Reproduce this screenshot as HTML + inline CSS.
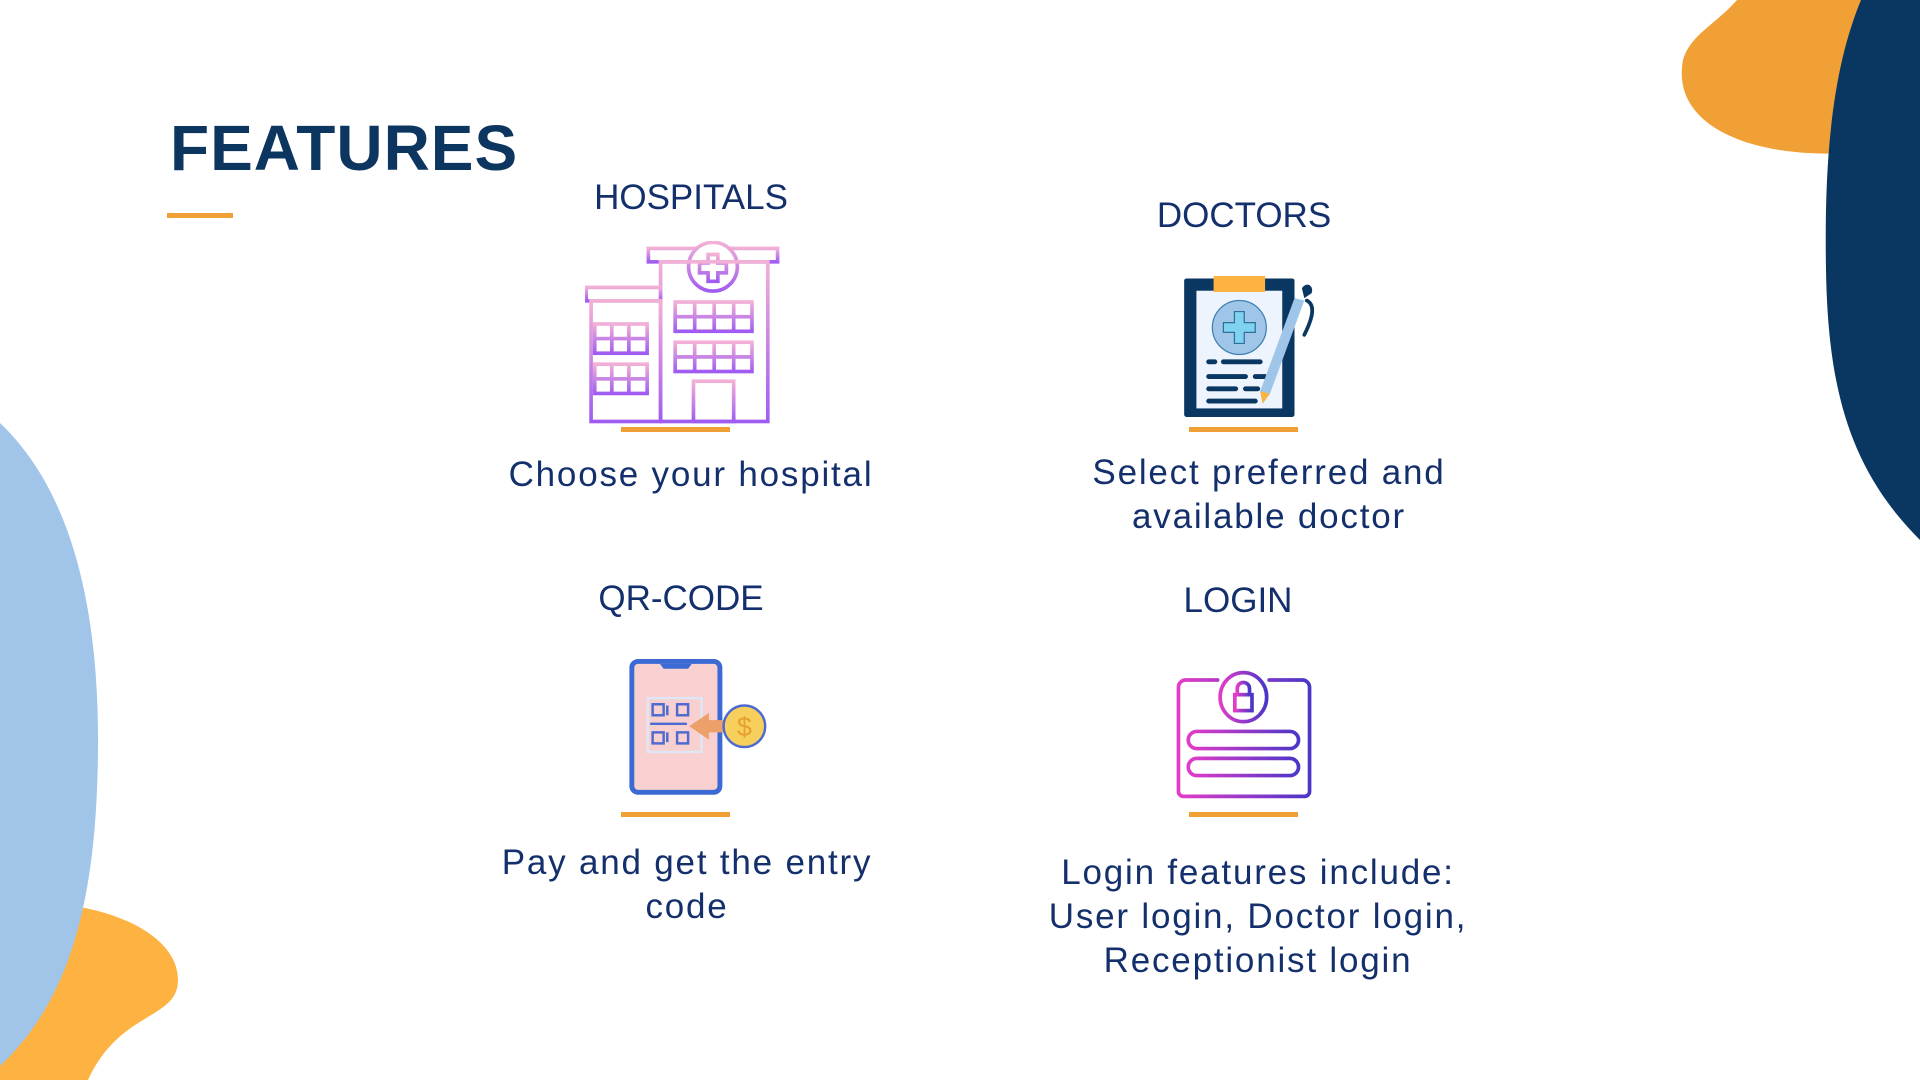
<!DOCTYPE html>
<html><head><meta charset="utf-8"><style>
html,body{margin:0;padding:0}
body{width:1920px;height:1080px;position:relative;overflow:hidden;background:#fff;font-family:"Liberation Sans",sans-serif;color:#14306c}
.t{position:absolute;white-space:nowrap;transform:translateX(-50%);text-align:center;font-size:35px;line-height:44px}
.d{font-size:35px;letter-spacing:1.8px}
.bar{position:absolute;background:#f0a035;height:5px;width:109px}
svg{position:absolute}
</style></head><body>
<svg style="left:0;top:0" width="1920" height="1080" viewBox="0 0 1920 1080">
<path d="M1737 0 C1715 25 1690 35 1683 60 C1670 130 1760 158 1845 153 L1920 150 L1920 0Z" fill="#f0a035"/>
<path d="M1861 0 C1832 70 1824 160 1826 270 C1828 390 1850 470 1920 540 L1920 0Z" fill="#0a3762"/>
<path d="M0 910 C60 890 178 920 178 980 C178 1020 120 1010 88 1080 L0 1080Z" fill="#fdb241"/>
<path d="M0 423 C60 480 98 580 98 740 C98 900 70 1000 0 1066Z" fill="#a0c5e8"/>
</svg>
<div style="position:absolute;left:170px;top:108px;font-size:64px;font-weight:bold;color:#0c3660;line-height:80px;letter-spacing:1px">FEATURES</div>
<div style="position:absolute;left:167px;top:213px;width:66px;height:5px;background:#f0a035"></div>

<div class="t" style="left:691px;top:176px">HOSPITALS</div>
<div class="t" style="left:1244px;top:194px">DOCTORS</div>
<div class="t" style="left:681px;top:577px">QR-CODE</div>
<div class="t" style="left:1238px;top:579px">LOGIN</div>

<div class="bar" style="left:621px;top:427px"></div>
<div class="bar" style="left:1189px;top:427px"></div>
<div class="bar" style="left:621px;top:812px"></div>
<div class="bar" style="left:1189px;top:812px"></div>

<div class="t d" style="left:691px;top:453px">Choose your hospital</div>
<div class="t d" style="left:1269px;top:451px">Select preferred and<br>available doctor</div>
<div class="t d" style="left:687px;top:841px">Pay and get the entry<br>code</div>
<div class="t d" style="left:1258px;top:851px">Login features include:<br>User login, Doctor login,<br>Receptionist login</div>

<!-- hospital -->
<svg style="left:585px;top:241px" width="195" height="183" viewBox="0 0 160 150">
<defs><linearGradient id="hg" x1="0" y1="0" x2="0" y2="1"><stop offset="0" stop-color="#f3b0d6"/><stop offset="1" stop-color="#a05cf2"/></linearGradient></defs>
<g fill="none" stroke="url(#hg)" stroke-width="3">
<rect x="52" y="6" width="106" height="11"/>
<circle cx="105" cy="21" r="20" fill="#fff"/>
<path d="M101 11h8v7h7v8h-7v7h-8v-7h-7v-8h7z"/>
<rect x="62" y="17" width="88" height="131"/>
<rect x="1" y="38" width="61" height="11"/>
<rect x="5" y="49" width="57" height="99"/>
<rect x="8" y="68" width="43" height="24"/><path d="M8 80h43M22 68v24M36 68v24"/>
<rect x="8" y="101" width="43" height="24"/><path d="M8 113h43M22 101v24M36 101v24"/>
<rect x="74" y="50" width="63" height="24"/><path d="M74 62h63M90 50v24M106 50v24M122 50v24"/>
<rect x="74" y="83" width="63" height="24"/><path d="M74 95h63M90 83v24M106 83v24M122 83v24"/>
<rect x="89" y="115" width="33" height="33"/><path d="M105 115v33"/>
</g></svg>

<!-- doctor -->
<svg style="left:1184px;top:276px" width="145" height="141" viewBox="0 0 118 115">
<rect x="0" y="2" width="90" height="113" rx="2" fill="#0a3762"/>
<rect x="10" y="12" width="70" height="96" fill="#eef4fd"/>
<rect x="24" y="0" width="42" height="13" fill="#fdb241"/>
<circle cx="45" cy="42" r="22" fill="#9fc5e8" stroke="#3d7fb0" stroke-width="1"/>
<path d="M41 29h8v9h9v8h-9v9h-8v-9h-9v-8h9z" fill="#7fd3f0" stroke="#2f6f9c" stroke-width="1"/>
<g stroke="#0a3762" stroke-width="4" stroke-linecap="round">
<path d="M20 70h5M32 70h30M20 82h30M58 82h8M20 92h22M50 92h10M20 102h38"/></g>
<path d="M90 18 L98 20 L70 96 L64 104 L62 94Z" fill="#9fc5e8"/>
<path d="M62 94 L70 96 L64 104Z" fill="#fdb241"/>
<path d="M96 10 C100 4 106 8 104 14 L98 18Z" fill="#0a3762"/>
<path d="M100 20 C108 24 104 36 98 48" stroke="#0a3762" stroke-width="3" fill="none" stroke-linecap="round"/>
</svg>

<!-- qr -->
<svg style="left:628px;top:659px" width="141" height="137" viewBox="0 0 115 112">
<rect x="3" y="2" width="72" height="107" rx="5" fill="#f8d0d0" stroke="#3b6ad4" stroke-width="4"/>
<path d="M26 4h26l-3 4h-20z" fill="#3b6ad4"/>
<rect x="16" y="32" width="44" height="44" fill="none" stroke="#dfe6f6" stroke-width="2"/>
<g fill="none" stroke="#4c6ad0" stroke-width="2">
<rect x="20" y="37" width="9" height="9"/><rect x="40" y="37" width="9" height="9"/><rect x="20" y="60" width="9" height="9"/><rect x="40" y="60" width="9" height="9"/>
<path d="M32 38v8M18 53h30M32 60v8"/></g>
<path d="M50 55 L66 44 L66 50 L84 50 L84 60 L66 60 L66 66Z" fill="#eea06a"/>
<circle cx="95" cy="55" r="17" fill="#f7cf5c" stroke="#4c6ad0" stroke-width="2"/>
<text x="95" y="63" font-size="22" text-anchor="middle" fill="#e8a030" font-family="Liberation Sans">$</text>
</svg>

<!-- login -->
<svg style="left:1176px;top:670px" width="136" height="129" viewBox="0 0 111 105">
<defs><linearGradient id="lg" x1="0" y1="0" x2="1" y2="0"><stop offset="0" stop-color="#e23cc8"/><stop offset="1" stop-color="#4a36c8"/></linearGradient></defs>
<g fill="none" stroke="url(#lg)" stroke-width="3" stroke-linecap="round">
<path d="M34 8H8a6 6 0 0 0-6 6v85a4 4 0 0 0 4 4h99a4 4 0 0 0 4-4V14a6 6 0 0 0-6-6H76"/>
<path d="M2 35h33M76 35h33"/>
<ellipse cx="55" cy="22" rx="19" ry="20"/>
<rect x="48" y="20" width="14" height="13"/><path d="M50 20v-5a5 5 0 0 1 10 0v5"/>
<rect x="10" y="50" width="90" height="14" rx="7"/><path d="M17 57h76"/>
<rect x="10" y="72" width="90" height="14" rx="7"/>
<path d="M18 79h1M25 79h1M32 79h1M39 79h1M46 79h1M53 79h1M60 79h1M67 79h1M74 79h1M81 79h1M88 79h1" stroke-width="2.5"/>
</g></svg>
</body></html>
